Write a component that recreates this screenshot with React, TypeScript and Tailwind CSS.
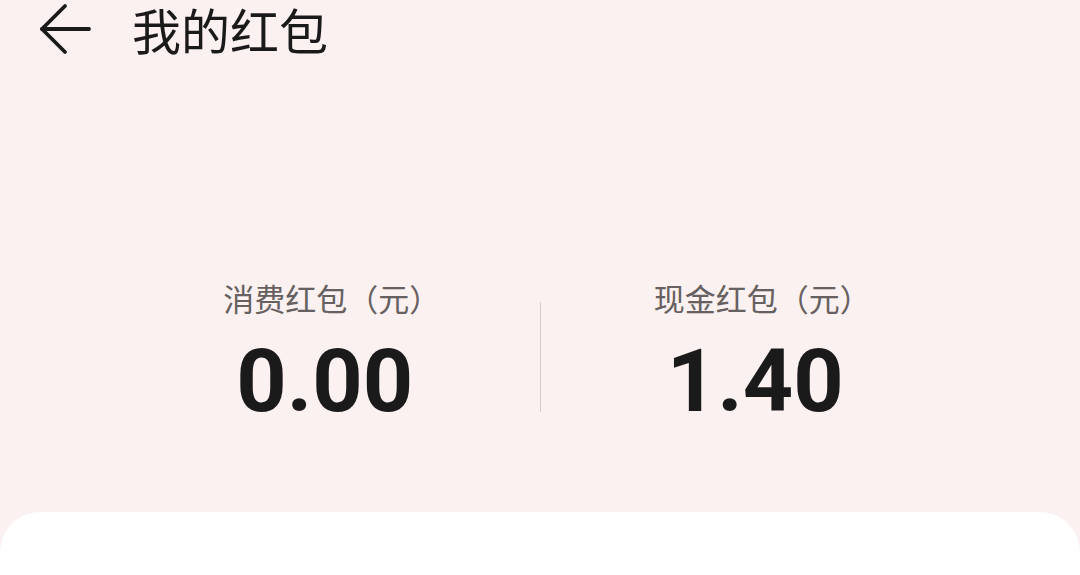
const num = { fontFamily: 'Roboto, "Noto Sans CJK SC", sans-serif' };
const cjk = { fontFamily: '"Noto Sans CJK SC", sans-serif' };

function Stat({ label, value }: { label: string; value: string }) {
  return (
    <div className="flex-1 flex flex-col items-center">
      <p className="text-[31px] leading-[40px] text-[#666060] pl-[14px]" style={cjk}>{label}</p>
      <p className="mt-[18px] text-[88px] leading-[90px] font-bold text-[#1a1a1a]" style={num}>{value}</p>
    </div>
  );
}

export default function App() {
  return (
    <main className="w-[1080px] h-[575px] overflow-hidden bg-[#fbf1f0] flex flex-col" style={cjk}>
      <header className="h-[58px] pt-[1px] flex items-start">
        <svg width="60" height="56" viewBox="0 0 60 56" className="ml-[36px]" fill="none" stroke="#1a1a1a" strokeWidth="3.8" strokeLinecap="round" strokeLinejoin="round">
          <path d="M29 5 L6 28 L29 51" />
          <path d="M6 28 H53" />
        </svg>
        <h1 className="ml-[36px] text-[49px] leading-[56px] text-[#1a1a1a]">我的红包</h1>
      </header>

      <div className="mt-[220px] px-[110px] flex items-center">
        <Stat label="消费红包（元）" value="0.00" />
        <div className="w-px h-[110px] bg-[#d6cfcf] mt-[10px]" />
        <Stat label="现金红包（元）" value="1.40" />
      </div>

      <div className="mt-[86px] flex-1 bg-white rounded-t-[40px]" />
    </main>
  );
}
